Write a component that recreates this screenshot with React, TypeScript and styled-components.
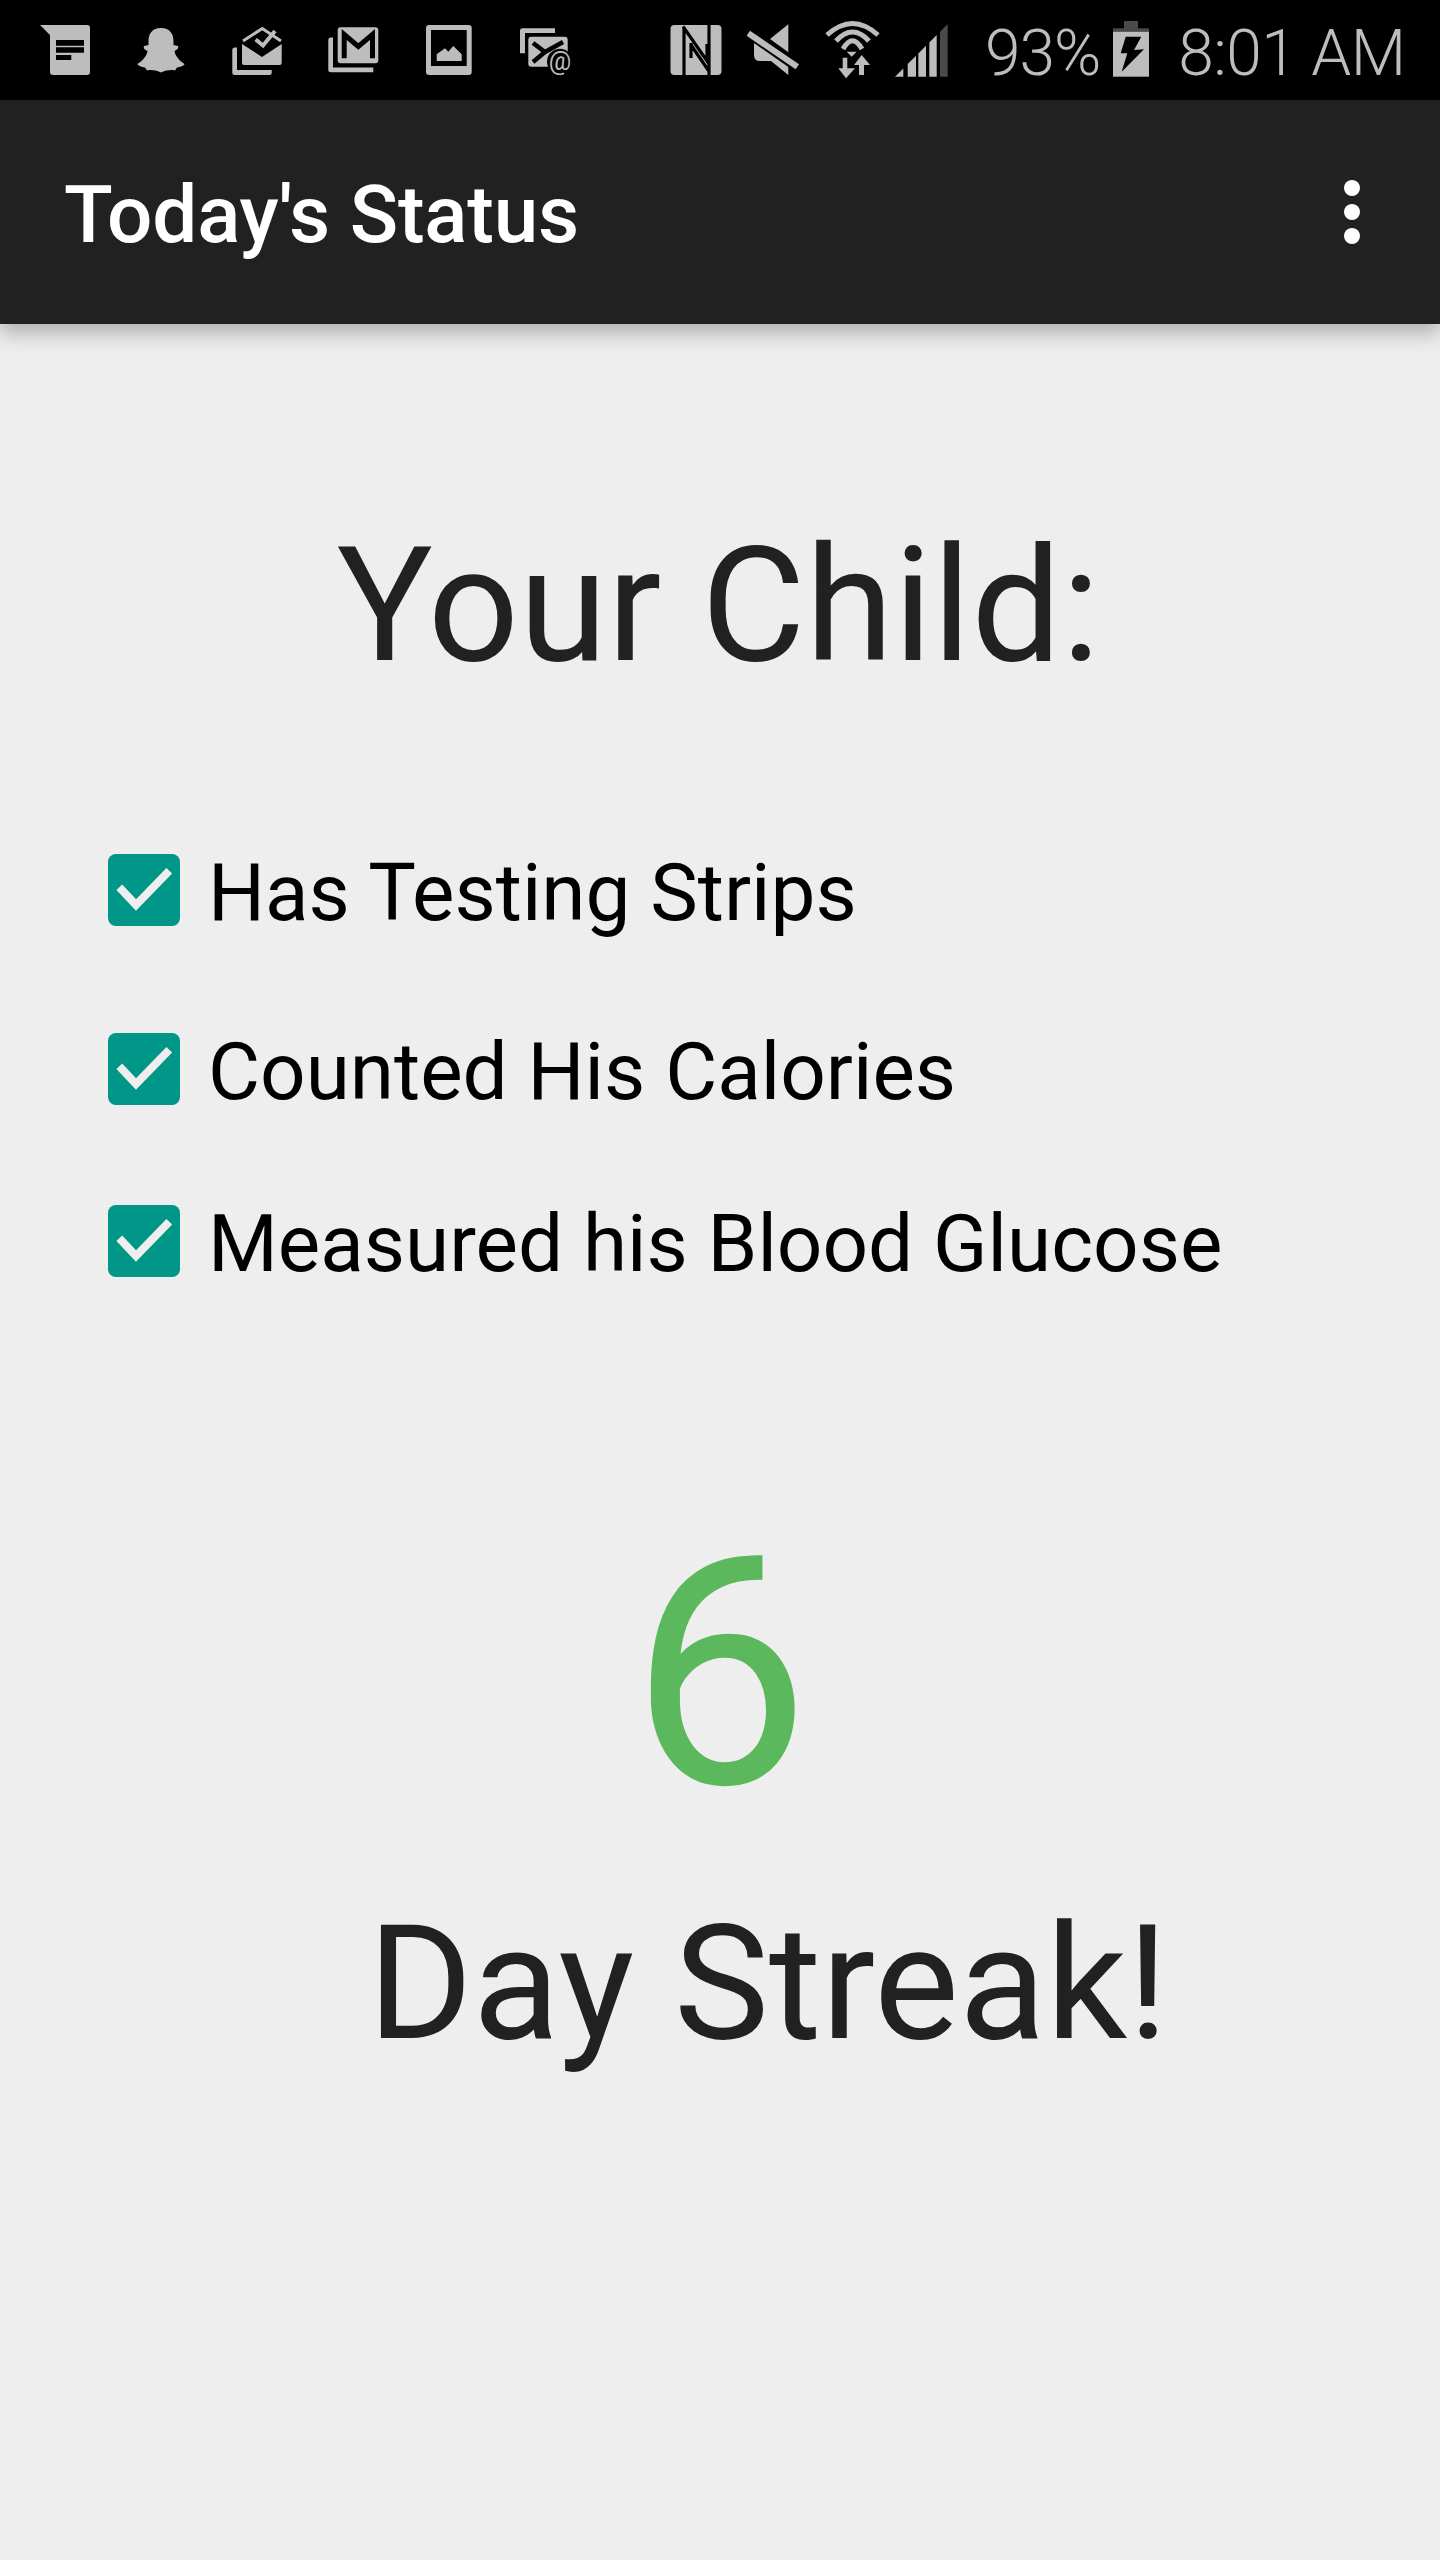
import React from "react";
import styled, { createGlobalStyle } from "styled-components";

const GRAY = "#bdbdbd";
const DIM = "#4a4a4a";

const GlobalStyle = createGlobalStyle`
  html, body {
    margin: 0;
    padding: 0;
    background: #eeeeee;
  }
  body {
    font-family: Roboto, "Noto Sans", sans-serif;
  }
`;

const Page = styled.div`
  width: 1440px;
  height: 2560px;
  background: #eeeeee;
  overflow: hidden;
`;

const StatusBar = styled.div`
  height: 100px;
  background: #000;
  display: flex;
  align-items: center;
  padding-left: 35px;
`;

const LeftIcons = styled.div`
  display: flex;
  gap: 36px;
`;

const RightIcons = styled.div`
  display: flex;
  gap: 16px;
  margin-left: 92px;
`;

const StatusIcon = styled.svg`
  width: 60px;
  height: 60px;
  overflow: visible;
  flex: none;
  display: block;
`;

const BatteryIcon = styled.svg`
  width: 36px;
  height: 60px;
  flex: none;
  display: block;
  margin-left: 13px;
`;

const StatusText = styled.span<{ $gap: number; $spacing: number }>`
  margin-left: ${(p) => p.$gap}px;
  padding-top: 8px;
  font-size: 64px;
  font-weight: 300;
  letter-spacing: ${(p) => p.$spacing}px;
  color: ${GRAY};
  line-height: 92px;
  white-space: nowrap;
`;

const AppBar = styled.header`
  height: 224px;
  box-sizing: border-box;
  background: #212121;
  display: flex;
  align-items: center;
  justify-content: space-between;
  padding: 0 80px 0 64px;
  box-shadow: 0 10px 18px rgba(0, 0, 0, 0.25);
  position: relative;
`;

const AppTitle = styled.h1`
  margin: 6px 0 0;
  font-size: 80px;
  font-weight: 500;
  letter-spacing: -0.2px;
  color: #fff;
`;

const Overflow = styled.div`
  display: flex;
  flex-direction: column;
  gap: 8px;
`;

const Dot = styled.span`
  width: 16px;
  height: 16px;
  border-radius: 50%;
  background: #fff;
`;

const Content = styled.main`
  display: flex;
  flex-direction: column;
`;

const Heading = styled.h2`
  margin: 192px 0 0;
  text-align: center;
  font-size: 160px;
  line-height: 180px;
  font-weight: 400;
  color: #212121;
  padding-right: 3px;
`;

const Checks = styled.ul`
  list-style: none;
  margin: 158px 0 0;
  padding: 0 0 0 108px;
  display: flex;
  flex-direction: column;
`;

const CheckRow = styled.li<{ $top: number }>`
  display: flex;
  align-items: center;
  gap: 28px;
  height: 72px;
  margin-top: ${(p) => p.$top}px;
  font-size: 80px;
  color: #000;
`;

const CheckLabel = styled.span`
  padding-top: 6px;
`;

const CheckBox = styled.span`
  width: 72px;
  height: 72px;
  border-radius: 8px;
  background: #009688;
  flex: none;
  display: flex;
`;

const CheckMark = styled.svg`
  width: 72px;
  height: 72px;
`;

const StreakNumber = styled.div`
  margin-top: 207px;
  text-align: center;
  font-size: 320px;
  line-height: 380px;
  color: #5cb85c;
`;

const StreakLabel = styled.div`
  margin-top: 30px;
  text-align: center;
  font-size: 160px;
  line-height: 180px;
  color: #212121;
  padding-left: 96px;
`;

const MessageIcon = () => (
  <StatusIcon viewBox="0 0 60 60">
    <path d="M5 5H52a3 3 0 0 1 3 3V52a3 3 0 0 1-3 3H18a3 3 0 0 1-3-3V15Z" fill={GRAY} />
    <path d="M21 20H49V25.7H21ZM21 27.3H49V32.7H21ZM21 35H36.3V40H21Z" fill="#000" />
  </StatusIcon>
);

const GhostIcon = () => (
  <StatusIcon viewBox="0 0 60 60">
    <path
      d="M30 8C21 8 17.5 14 17.5 21V25L13 26C12 28 14 30 16.5 31C16 36 11 41 6.5 44C7 46 11 47 14 47.5L16 50.5C20 49.5 24 50 30 52.5C36 50 40 49.5 44 50.5L46 47.5C49 47 53 46 53.5 44C49 41 44 36 43.5 31C46 30 48 28 47 26L42.5 25V21C42.5 14 39 8 30 8Z"
      fill={GRAY}
    />
  </StatusIcon>
);

const MailOpenIcon = () => (
  <StatusIcon viewBox="0 0 60 60">
    <path d="M5.3 30a2.5 2.5 0 0 1 2.5-2.5H10V50H44.7V52.5a2.5 2.5 0 0 1-2.5 2.5H7.8a2.5 2.5 0 0 1-2.5-2.5Z" fill={GRAY} />
    <path d="M15 24L35 37L54.7 24V43a2 2 0 0 1-2 2H17a2 2 0 0 1-2-2Z" fill={GRAY} />
    <path d="M16 21L35.3 8.5L54 21" fill="none" stroke={GRAY} strokeWidth="3" />
    <path d="M28.7 19.5L36 25.5L48 11" fill="none" stroke={GRAY} strokeWidth="4" />
  </StatusIcon>
);

const GmailStackIcon = () => (
  <StatusIcon viewBox="0 0 60 60">
    <path d="M5.3 20a2.5 2.5 0 0 1 2.5-2.5H10V47.5H50.3V52.3H7.8a2.5 2.5 0 0 1-2.5-2.5Z" fill={GRAY} />
    <rect x="14.7" y="7.3" width="40.6" height="36" rx="3" fill={GRAY} />
    <path d="M21.2 38.3V14.5L35.3 26.5L49.5 14.5V38.3" fill="none" stroke="#000" strokeWidth="5" />
  </StatusIcon>
);

const PictureIcon = () => (
  <StatusIcon viewBox="0 0 60 60">
    <rect x="7" y="5" width="45.7" height="50" rx="3" fill={GRAY} />
    <rect x="12" y="10" width="35.7" height="36" fill="#000" />
    <path d="M17.7 34.3L26 28.3L29.3 31.7L34.3 26L42.7 34.3V41H17.7Z" fill={GRAY} />
  </StatusIcon>
);

const MailAtIcon = () => (
  <StatusIcon viewBox="0 0 60 60">
    <path d="M5 10.8a2.5 2.5 0 0 1 2.5-2.5H40V13H10V33.3H5Z" fill={GRAY} />
    <rect x="13.3" y="16.7" width="39.4" height="30" rx="3" fill={GRAY} />
    <path d="M18 23L30 32L48 22M18 42L30 32" fill="none" stroke="#000" strokeWidth="4.5" />
    <circle cx="45" cy="41.7" r="13" fill="#000" />
    <text x="45" y="50" textAnchor="middle" fontFamily="Roboto, sans-serif" fontSize="25" fill={GRAY}>
      @
    </text>
  </StatusIcon>
);

const NfcIcon = () => (
  <StatusIcon viewBox="0 0 60 60">
    <rect x="3.5" y="5" width="51" height="50" rx="4" fill={GRAY} />
    <path
      d="M17 7V55M42 5V55M16 6.5L40 41V24M24 23V38M24 25L42.5 52"
      fill="none"
      stroke="#000"
      strokeWidth="3.2"
    />
  </StatusIcon>
);

const MuteIcon = () => (
  <StatusIcon viewBox="0 0 60 60">
    <path d="M45.3 4.3L27 19L45.3 32.3Z" fill={GRAY} />
    <path d="M11 23L45.3 47V55L28 41H17Q11 41 11 35Z" fill={GRAY} />
    <path d="M5.3 13.3L54.3 46.7" fill="none" stroke={GRAY} strokeWidth="6" />
  </StatusIcon>
);

const WifiIcon = () => (
  <StatusIcon viewBox="0 0 60 60">
    <path d="M8 15Q33.5 -8 59 15M17 21Q33.5 3 50 21M24 29Q33.5 12.4 43 29" fill="none" stroke={GRAY} strokeWidth="5" />
    <path d="M27.7 31.7H37.7L32.7 36.7Z" fill={GRAY} />
    <path d="M23.7 37.7H28.3V48.3H36L27 58.3L19.3 48.3H23.7Z" fill={GRAY} />
    <path d="M42.7 35L51 45H45V55H40V45H35Z" fill={GRAY} />
  </StatusIcon>
);

const SignalIcon = () => (
  <StatusIcon viewBox="0 0 60 60">
    <path d="M0 56.7L8.3 48.4V56.7Z" fill={GRAY} />
    <path d="M12.7 44V56.7H21V35.7Z" fill={GRAY} />
    <path d="M23.3 33.4V56.7H31V25.7Z" fill={GRAY} />
    <path d="M34.3 22.4V56.7H41.7V15Z" fill={GRAY} />
    <path d="M45 11.7V56.7H52.7V4Z" fill={DIM} />
  </StatusIcon>
);

const Battery = () => (
  <BatteryIcon viewBox="0 0 36 60">
    <rect x="11" y="1" width="14" height="8" fill={DIM} />
    <rect x="0" y="8.3" width="36" height="3.4" fill={DIM} />
    <rect x="0" y="11.7" width="36" height="45" fill={GRAY} />
    <path d="M12.7 16.7H28.3L21 30L31 29.3L8.7 51.7L14.3 33.3H7.7Z" fill="#000" />
  </BatteryIcon>
);

const rows = [
  { label: "Has Testing Strips", top: 0 },
  { label: "Counted His Calories", top: 107 },
  { label: "Measured his Blood Glucose", top: 100 },
];

const App: React.FC = () => {
  return (
    <Page>
      <GlobalStyle />
      <StatusBar>
        <LeftIcons>
          <MessageIcon />
          <GhostIcon />
          <MailOpenIcon />
          <GmailStackIcon />
          <PictureIcon />
          <MailAtIcon />
        </LeftIcons>
        <RightIcons>
          <NfcIcon />
          <MuteIcon />
          <WifiIcon />
          <SignalIcon />
        </RightIcons>
        <StatusText $gap={30} $spacing={-1}>93%</StatusText>
        <Battery />
        <StatusText $gap={29} $spacing={-0.5}>8:01 AM</StatusText>
      </StatusBar>
      <AppBar>
        <AppTitle>Today's Status</AppTitle>
        <Overflow>
          <Dot />
          <Dot />
          <Dot />
        </Overflow>
      </AppBar>
      <Content>
        <Heading>Your Child:</Heading>
        <Checks>
          {rows.map((row) => (
            <CheckRow key={row.label} $top={row.top}>
              <CheckBox>
                <CheckMark viewBox="0 0 72 72">
                  <path d="M11.3 33.3L28 51L61.3 16.7" fill="none" stroke="#eeeeee" strokeWidth="8" />
                </CheckMark>
              </CheckBox>
              <CheckLabel>{row.label}</CheckLabel>
            </CheckRow>
          ))}
        </Checks>
        <StreakNumber>6</StreakNumber>
        <StreakLabel>Day Streak!</StreakLabel>
      </Content>
    </Page>
  );
};

export default App;
